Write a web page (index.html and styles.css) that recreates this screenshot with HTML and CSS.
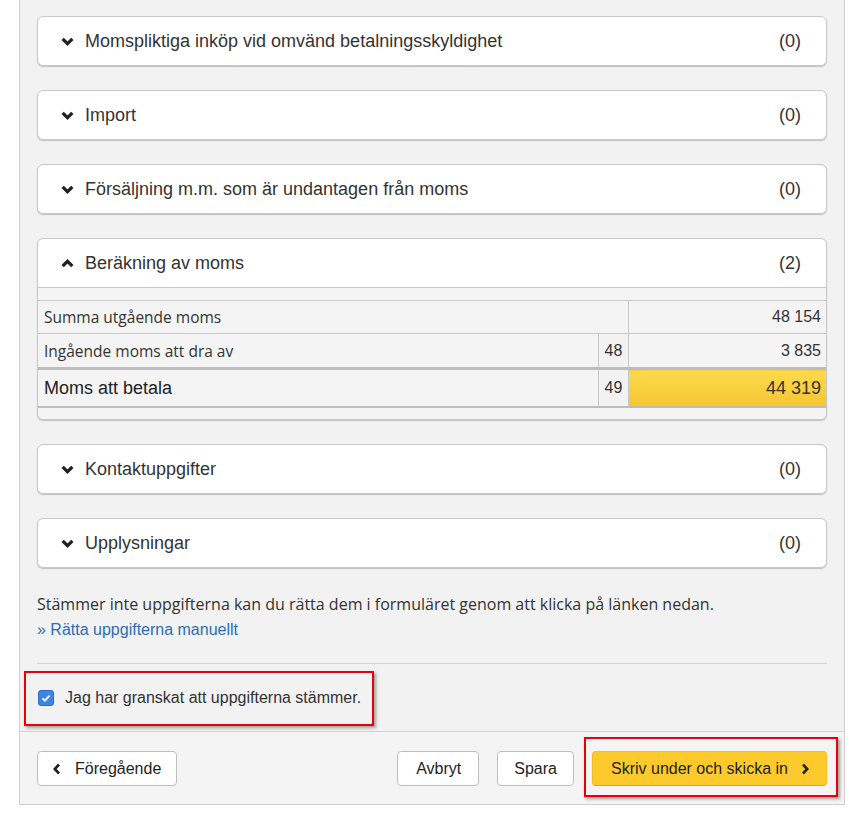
FILE: index.html
```html
<!DOCTYPE html>
<html lang="sv">
<head>
  <meta charset="UTF-8" />
  <title>Momsdeklaration</title>
  <link rel="stylesheet" href="styles.css">
</head>
<body>
  <div class="panel">
    <div class="panel-body">
      <div class="card">
        <div class="card-head">
          <svg class="chev" viewBox="0 0 12 8"><path d="M1.5 1.5 6 6l4.5-4.5"/></svg>
          <span class="card-title">Momspliktiga inköp vid omvänd betalningsskyldighet</span>
          <span class="count">(0)</span>
        </div>
      </div>
      <div class="card">
        <div class="card-head">
          <svg class="chev" viewBox="0 0 12 8"><path d="M1.5 1.5 6 6l4.5-4.5"/></svg>
          <span class="card-title">Import</span>
          <span class="count">(0)</span>
        </div>
      </div>
      <div class="card">
        <div class="card-head">
          <svg class="chev" viewBox="0 0 12 8"><path d="M1.5 1.5 6 6l4.5-4.5"/></svg>
          <span class="card-title">Försäljning m.m. som är undantagen från moms</span>
          <span class="count">(0)</span>
        </div>
      </div>
      <div class="card open">
        <div class="card-head">
          <svg class="chev" viewBox="0 0 12 8"><path d="M1.5 6.5 6 2l4.5 4.5"/></svg>
          <span class="card-title">Beräkning av moms</span>
          <span class="count">(2)</span>
        </div>
        <div class="card-content">
          <table class="calc">
            <tr>
              <td class="label" colspan="2">Summa utgående moms</td>
              <td class="value">48 154</td>
            </tr>
            <tr class="sub">
              <td class="label">Ingående moms att dra av</td>
              <td class="nr">48</td>
              <td class="value">3 835</td>
            </tr>
            <tr class="total">
              <td class="label">Moms att betala</td>
              <td class="nr">49</td>
              <td class="value">44 319</td>
            </tr>
          </table>
        </div>
      </div>
      <div class="card">
        <div class="card-head">
          <svg class="chev" viewBox="0 0 12 8"><path d="M1.5 1.5 6 6l4.5-4.5"/></svg>
          <span class="card-title">Kontaktuppgifter</span>
          <span class="count">(0)</span>
        </div>
      </div>
      <div class="card">
        <div class="card-head">
          <svg class="chev" viewBox="0 0 12 8"><path d="M1.5 1.5 6 6l4.5-4.5"/></svg>
          <span class="card-title">Upplysningar</span>
          <span class="count">(0)</span>
        </div>
      </div>

      <p class="note">Stämmer inte uppgifterna kan du rätta dem i formuläret genom att klicka på länken nedan.</p>
      <a class="link" href="#">&raquo; Rätta uppgifterna manuellt</a>

      <div class="confirm">
        <label class="check-row">
          <span class="checkbox">
            <svg viewBox="0 0 16 16"><path d="M4 8.3 6.8 11 12 5.2"/></svg>
          </span>
          Jag har granskat att uppgifterna stämmer.
        </label>
        <div class="mark mark-check"></div>
      </div>
    </div>

    <div class="panel-foot">
      <button class="btn btn-prev">
        <svg viewBox="0 0 8 12"><path d="M6 1.5 1.8 6 6 10.5"/></svg>
        Föregående
      </button>
      <div class="foot-right">
        <button class="btn btn-cancel">Avbryt</button>
        <button class="btn">Spara</button>
        <div class="submit-wrap">
          <button class="btn btn-submit">
            Skriv under och skicka in
            <svg viewBox="0 0 8 12"><path d="M2 1.5 6.2 6 2 10.5"/></svg>
          </button>
          <div class="mark mark-submit"></div>
        </div>
      </div>
    </div>
  </div>
</body>
</html>
```

FILE: styles.css
```css
body {
  margin: 0;
  background: #fff;
  font-family: "Liberation Sans", Arial, sans-serif;
  color: #333;
}
.panel {
  margin-left: 19px;
  width: 824px;
  border: 1px solid #cfcfcf;
  border-top: none;
  background: #f2f2f2;
}
.panel-body {
  padding: 16px 17px 0;
}
.card {
  background: #fff;
  border: 1px solid #c8c8c8;
  border-radius: 6px;
  box-shadow: 0 1px 1px rgba(0,0,0,0.2);
  margin-bottom: 24px;
}
.card-head {
  display: flex;
  align-items: center;
  height: 48px;
  padding: 0 25px 0 23px;
  font-size: 18px;
}
.chev {
  width: 13px;
  height: 9px;
  flex-shrink: 0;
  fill: none;
  stroke: #222;
  stroke-width: 3;
  margin-right: 11px;
}
.card-title {
  flex: 1;
}
.open .card-head {
  border-bottom: 1px solid #c8c8c8;
}
.card-content {
  background: #f4f4f4;
  padding: 12px 0 11px;
  border-radius: 0 0 6px 6px;
}
/* beräkningstabell */
.calc {
  width: 100%;
  border-collapse: collapse;
  border-top: 1px solid #c8c8c8;
  font-size: 16px;
}
.calc td {
  border-bottom: 1px solid #c8c8c8;
  height: 32px;
  padding: 0;
}
.calc .label {
  padding-left: 6px;
  font-family: "Open Sans", "Noto Sans", sans-serif;
  font-size: 15.5px;
  color: #333;
}
.calc .nr {
  width: 29px;
  border-left: 1px solid #c8c8c8;
  text-align: center;
  background: #f2f2f2;
}
.calc .value {
  width: 192px;
  border-left: 1px solid #c8c8c8;
  text-align: right;
  padding-right: 5px;
}
.calc .sub td {
  height: 33px;
  border-bottom: 3px solid #bdbdbd;
}
.calc .total td {
  height: 36px;
  border-bottom: 2px solid #bdbdbd;
}
.calc .total .label {
  font-family: "Liberation Sans", Arial, sans-serif;
  font-size: 18px;
  color: #222;
}
.calc .total .value {
  background: linear-gradient(#fdda4c, #f5c533);
  font-size: 18px;
}
.note {
  margin: 23px 0 0;
  font-family: "Open Sans", "Noto Sans", sans-serif;
  font-size: 16px;
  line-height: 24px;
  color: #333;
}
.link {
  display: inline-block;
  margin-top: 2px;
  line-height: 24px;
  font-size: 16px;
  color: #2c6cb5;
  text-decoration: none;
}
.confirm {
  position: relative;
  margin-top: 21px;
  border-top: 1px solid #d2d2d2;
  height: 67px;
  display: flex;
  align-items: center;
}
.check-row {
  display: flex;
  align-items: center;
  font-size: 16px;
  color: #333;
  padding-left: 1px;
}
.checkbox {
  width: 16px;
  height: 16px;
  box-sizing: border-box;
  background: #3d85e6;
  border: 1px solid #2d6ccc;
  border-radius: 3px;
  margin-right: 11px;
  display: flex;
}
.checkbox svg {
  width: 14px;
  height: 14px;
  fill: none;
  stroke: #fff;
  stroke-width: 2;
}
/* röda markeringar */
.mark {
  position: absolute;
  border: 2px solid #e8000b;
  box-shadow: 2px 2px 3px rgba(0,0,0,0.35);
  pointer-events: none;
}
.mark-check {
  left: -13px;
  top: 7px;
  width: 346px;
  height: 51px;
}
.panel-foot {
  display: flex;
  justify-content: space-between;
  align-items: center;
  padding: 19px 17px 18px;
  border-top: 1px solid #d2d2d2;
  background: #f4f4f4;
}
.foot-right {
  display: flex;
  gap: 18px;
}
.btn {
  height: 35px;
  padding: 0 16px;
  border: 1px solid #bdbdbd;
  border-radius: 4px;
  background: #fff;
  font-family: "Liberation Sans", Arial, sans-serif;
  font-size: 16px;
  color: #222;
  display: flex;
  align-items: center;
  white-space: nowrap;
  cursor: pointer;
}
.btn svg {
  width: 8px;
  height: 12px;
  flex-shrink: 0;
  fill: none;
  stroke: #222;
  stroke-width: 2.6;
}
.btn-cancel {
  padding: 0 17px 0 18px;
}
.btn-prev {
  width: 140px;
  padding-left: 15px;
}
.btn-prev svg {
  margin-right: 14px;
}
.submit-wrap {
  position: relative;
}
.btn-submit {
  width: 235px;
  padding-left: 18px;
  background: #fdca2d;
  border-color: #f1bd1f;
  border-bottom-color: #d9a815;
}
.btn-submit svg {
  margin-left: 13px;
}
.mark-submit {
  left: -8px;
  top: -14px;
  width: 250px;
  height: 56px;
}
```
